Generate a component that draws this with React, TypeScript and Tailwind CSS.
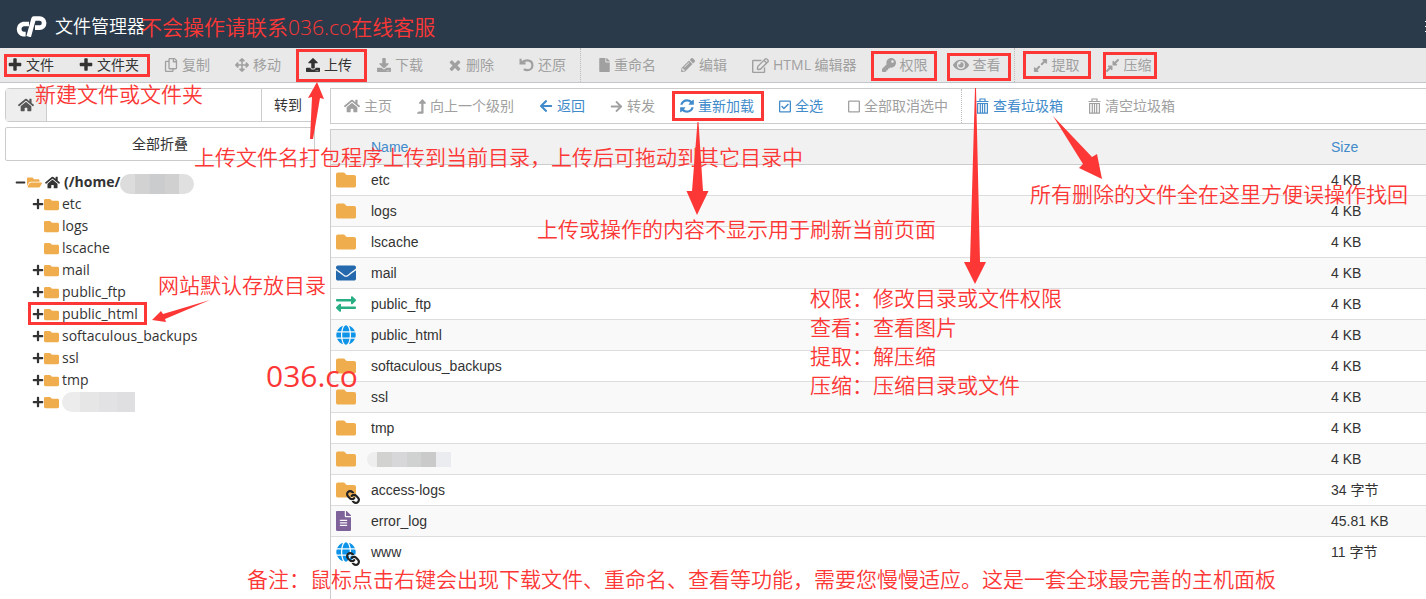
import { useState } from 'react';
import type { ReactNode } from 'react';
import {
  FaArrowLeft,
  FaArrowRight,
  FaArrowsAlt,
  FaCompressAlt,
  FaDownload,
  FaEnvelope,
  FaExchangeAlt,
  FaExpandAlt,
  FaEye,
  FaFile,
  FaFileAlt,
  FaFolder,
  FaFolderOpen,
  FaGlobe,
  FaHome,
  FaKey,
  FaLevelUpAlt,
  FaLink,
  FaMinus,
  FaPencilAlt,
  FaPlus,
  FaRegCheckSquare,
  FaRegCopy,
  FaRegEdit,
  FaRegSquare,
  FaUpload
} from 'react-icons/fa';

type Item = { label: string; icon: ReactNode; tone?: string };

const Glyph = ({ d }: { d: string }) => (
  <svg width="16" height="16" viewBox="0 0 1792 1792" fill="currentColor" className="-mx-px">
    <path d={d} />
  </svg>
);

const plusPath =
  'M1600 736v192q0 40-28 68t-68 28h-416v416q0 40-28 68t-68 28h-192q-40 0-68-28t-28-68v-416h-416q-40 0-68-28t-28-68v-192q0-40 28-68t68-28h416v-416q0-40 28-68t68-28h192q40 0 68 28t28 68v416h416q40 0 68 28t28 68z';
const timesPath =
  'M1490 1322q0 40-28 68l-136 136q-28 28-68 28t-68-28l-294-294-294 294q-28 28-68 28t-68-28l-136-136q-28-28-28-68t28-68l294-294-294-294q-28-28-28-68t28-68l136-136q28-28 68-28t68 28l294 294 294-294q28-28 68-28t68 28l136 136q28 28 28 68t-28 68l-294 294 294 294q28 28 28 68z';
const refreshPath =
  'M1639 1056q0 5-1 7-64 268-268 434.5t-478 166.5q-146 0-282.5-55t-243.5-157l-129 129q-19 19-45 19t-45-19-19-45v-448q0-26 19-45t45-19h448q26 0 45 19t19 45-19 45l-137 137q71 66 161 102t187 36q134 0 250-65t186-179q11-17 53-117 8-23 30-23h192q13 0 22.500 9.500t9.500 22.500zm25-800v448q0 26-19 45t-45 19h-448q-26 0-45-19t-19-45 19-45l138-138q-148-137-349-137-134 0-250 65t-186 179q-11 17-53 117-8 23-30 23h-199q-13 0-22.500-9.500t-9.500-22.500v-7q65-268 270-434.500t480-166.500q146 0 284 55.500t245 156.500l130-129q19-19 45-19t45 19 19 45z';

const UndoIcon = () => (
  <svg width="15" height="14" viewBox="0 0 15 14" fill="none" stroke="currentColor" strokeWidth="2.2">
    <path d="M1.6 0.8V5.4H6.6M2.2 5C4 3 5.5 2.3 8.2 2.3C11.5 2.3 13.4 4.4 13.4 7.2C13.4 10.2 11.3 12.2 8.4 12.2C7 12.2 5.8 11.9 4.8 11.2" />
  </svg>
);

const TrashIcon = () => (
  <svg width="13" height="16" viewBox="0 0 13 16" fill="none" stroke="currentColor" strokeWidth="1.2">
    <path d="M0.5 3.5h12M4 3.2V1h5v2.2M1.6 5.5h9.8v9.7H1.6zM4.3 5.5v9.5M6.5 5.5v9.5M8.7 5.5v9.5" />
  </svg>
);

const Logo = () => (
  <svg width="31" height="21" viewBox="47 47 93 63" fill="none" stroke="currentColor" strokeWidth="14">
    <path d="M86 71H69A15.5 15.5 0 0 0 69 101.5H76" />
    <path d="M85 109L100 54.5H118A12.5 12.8 0 0 1 118 82H104" strokeLinejoin="round" />
  </svg>
);

const fileActions: Item[] = [
  { label: '文件', icon: <Glyph d={plusPath} />, tone: 'text-[#333]' },
  { label: '文件夹', icon: <Glyph d={plusPath} />, tone: 'text-[#333]' },
  { label: '复制', icon: <FaRegCopy size={14} /> },
  { label: '移动', icon: <FaArrowsAlt size={14} /> },
  { label: '上传', icon: <FaUpload size={14} />, tone: 'text-[#333]' },
  { label: '下载', icon: <FaDownload size={14} /> },
  { label: '删除', icon: <Glyph d={timesPath} /> },
  { label: '还原', icon: <UndoIcon /> }
];

const editActions: Item[] = [
  { label: '重命名', icon: <FaFile size={14} className="w-[11px]" /> },
  { label: '编辑', icon: <FaPencilAlt size={14} /> },
  { label: 'HTML 编辑器', icon: <FaRegEdit size={17} /> },
  { label: '权限', icon: <FaKey size={14} /> },
  { label: '查看', icon: <FaEye size={16} /> }
];

const archiveActions: Item[] = [
  { label: '提取', icon: <FaExpandAlt size={15} /> },
  { label: '压缩', icon: <FaCompressAlt size={15} /> }
];

const navActions: Item[] = [
  { label: '主页', icon: <FaHome size={16} /> },
  { label: '向上一个级别', icon: <FaLevelUpAlt size={15} className="w-[9px]" /> },
  { label: '返回', icon: <FaArrowLeft size={14} />, tone: 'text-[#428bca]' },
  { label: '转发', icon: <FaArrowRight size={13} /> },
  { label: '重新加载', icon: <Glyph d={refreshPath} />, tone: 'text-[#428bca]' },
  { label: '全选', icon: <FaRegCheckSquare size={15} className="w-3" />, tone: 'text-[#428bca]' },
  { label: '全部取消选中', icon: <FaRegSquare size={15} className="w-3" /> }
];

const trashActions: Item[] = [
  { label: '查看垃圾箱', icon: <TrashIcon />, tone: 'text-[#428bca]' },
  { label: '清空垃圾箱', icon: <TrashIcon /> }
];

const tree = [
  { name: 'etc', expandable: true },
  { name: 'logs', expandable: false },
  { name: 'lscache', expandable: false },
  { name: 'mail', expandable: true },
  { name: 'public_ftp', expandable: true },
  { name: 'public_html', expandable: true },
  { name: 'softaculous_backups', expandable: true },
  { name: 'ssl', expandable: true },
  { name: 'tmp', expandable: true },
  { name: '', expandable: true }
];

const files = [
  { name: 'etc', type: 'folder', size: '4 KB' },
  { name: 'logs', type: 'folder', size: '4 KB' },
  { name: 'lscache', type: 'folder', size: '4 KB' },
  { name: 'mail', type: 'mail', size: '4 KB' },
  { name: 'public_ftp', type: 'ftp', size: '4 KB' },
  { name: 'public_html', type: 'web', size: '4 KB' },
  { name: 'softaculous_backups', type: 'folder', size: '4 KB' },
  { name: 'ssl', type: 'folder', size: '4 KB' },
  { name: 'tmp', type: 'folder', size: '4 KB' },
  { name: '', type: 'folder', size: '4 KB' },
  { name: 'access-logs', type: 'folder', size: '34 字节', link: true },
  { name: 'error_log', type: 'log', size: '45.81 KB' },
  { name: 'www', type: 'web', size: '11 字节', link: true }
];

const fileIcons: Record<string, ReactNode> = {
  folder: <FaFolder size={20} className="text-[#f0ad4e]" />,
  mail: <FaEnvelope size={20} className="text-[#2469ae]" />,
  ftp: <FaExchangeAlt size={20} className="text-[#27ae83]" />,
  web: <FaGlobe size={20} className="text-[#0d93e8]" />,
  log: <FaFileAlt size={20} className="w-[15px] text-[#7f6299]" />
};

const boxes = [
  'left-[4px] top-[54px] w-[146px] h-[23px]',
  'left-[296px] top-[49px] w-[71px] h-[33px]',
  'left-[871px] top-[51px] w-[66px] h-[30px]',
  'left-[947px] top-[53px] w-[64px] h-[28px]',
  'left-[1023px] top-[51px] w-[68px] h-[28px]',
  'left-[1103px] top-[52px] w-[54px] h-[27px]',
  'left-[672px] top-[91px] w-[92px] h-[30px]',
  'left-[28px] top-[302px] w-[119px] h-[23px]'
];

const notes = [
  { text: '不会操作请联系036.co在线客服', place: 'left-[141px] top-[12px]' },
  { text: '新建文件或文件夹', place: 'left-[35px] top-[79px]' },
  { text: '上传文件名打包程序上传到当前目录，上传后可拖动到其它目录中', place: 'left-[194px] top-[142px]' },
  { text: '上传或操作的内容不显示用于刷新当前页面', place: 'left-[537px] top-[214px]' },
  { text: '所有删除的文件全在这里方便误操作找回', place: 'left-[1030px] top-[179px]' },
  { text: '网站默认存放目录', place: 'left-[158px] top-[270px]' },
  {
    text: '备注：鼠标点击右键会出现下载文件、重命名、查看等功能，需要您慢慢适应。这是一套全球最完善的主机面板',
    place: 'left-[247px] top-[564px]'
  }
];

const legend = ['权限：修改目录或文件权限', '查看：查看图片', '提取：解压缩', '压缩：压缩目录或文件'];

function ActionGroup({ items }: { items: Item[] }) {
  return (
    <div className="flex items-center gap-[25px]">
      {items.map((item) => (
        <button
          key={item.label}
          className={`flex items-center gap-1 whitespace-nowrap ${item.tone ?? 'text-[#a0a0a0]'}`}
        >
          {item.icon}
          <span>{item.label}</span>
        </button>
      ))}
    </div>
  );
}

function Header() {
  return (
    <header className="flex h-12 items-center overflow-hidden bg-[#2a3a4a] pt-1 pl-4 text-white">
      <Logo />
      <h1 className="ml-2 text-lg font-[350]">文件管理器</h1>
      <div className="ml-auto flex w-px flex-col gap-1">
        <span className="h-px bg-white" />
        <span className="h-px bg-white" />
        <span className="h-px bg-white" />
      </div>
    </header>
  );
}

function Sidebar() {
  const [path, setPath] = useState('');

  return (
    <aside className="w-[310px] shrink-0">
      <div className="flex h-[34px] rounded-sm border border-[#ccc]">
        <button aria-label="主页" className="flex w-[41px] items-center justify-center border-r border-[#ccc] bg-[#eee] text-[#555]">
          <FaHome size={16} />
        </button>
        <input
          aria-label="路径"
          value={path}
          onChange={(e) => setPath(e.target.value)}
          className="min-w-0 flex-1 px-3 outline-none"
        />
        <button className="w-[53px] border-l border-[#ccc]">转到</button>
      </div>
      <button className="mt-[5px] h-[34px] w-full rounded-xs border border-[#ccc]">全部折叠</button>

      {/* Directory tree */}
      <ul className="mt-[10px] pl-[10px]">
        <li className="flex h-[22px] items-center font-bold">
          <FaMinus size={11} />
          <FaFolderOpen size={15} className="ml-px text-[#f0ad4e]" />
          <FaHome size={15} className="ml-[3px]" />
          <span className="ml-1">(/home/</span>
          <span className="mt-1 flex h-5 w-[74px] overflow-hidden rounded-full">
            <span className="flex-1 bg-[#dcdcdc]" />
            <span className="flex-1 bg-[#d2d2d3]" />
            <span className="flex-1 bg-[#cbccce]" />
            <span className="flex-1 bg-[#d0d0d1]" />
            <span className="flex-1 bg-[#e0e0e1]" />
          </span>
        </li>
        {tree.map((node) => (
          <li key={node.name} className="flex h-[22px] items-center pl-[17px]">
            <span className="w-3">{node.expandable && <FaPlus size={12} />}</span>
            <FaFolder size={15} className="text-[#f0ad4e]" />
            {node.name ? (
              <a href="#" className="ml-[3px]">{node.name}</a>
            ) : (
              <span className="ml-[3px] flex h-5 w-[73px] overflow-hidden rounded-l-full">
                <span className="flex-1 bg-[#ececed]" />
                <span className="flex-1 bg-[#e6e6e7]" />
                <span className="flex-1 bg-[#e2e2e4]" />
                <span className="flex-1 bg-[#dfdfe1]" />
              </span>
            )}
          </li>
        ))}
      </ul>
    </aside>
  );
}

function FileTable() {
  return (
    <div className="mt-[5px] flex-1 border-l border-[#ccc] font-['Liberation_Sans','Noto_Sans_CJK_SC',sans-serif]">
      <table className="w-full border-collapse text-left">
        <thead>
          <tr className="h-[35px] border-y border-[#ccc] bg-[#f1f1f1] text-[#428bca]">
            <th className="w-10" />
            <th className="font-normal">Name</th>
            <th className="w-[95px] font-normal">Size</th>
          </tr>
        </thead>
        <tbody>
          {files.map((file) => (
            <tr key={file.name} className="h-[31px] border-b border-[#ddd] last:border-0 even:bg-[#f9f9f9]">
              <td className="pl-[5px]">
                <span className="relative block w-5">
                  {fileIcons[file.type]}
                  {file.link && <FaLink size={14} className="absolute -right-1 -bottom-1 rotate-90 text-[#222]" />}
                </span>
              </td>
              <td>
                {file.name || (
                  <span className="-ml-1 flex h-[15px] w-[84px] overflow-hidden rounded-l-full">
                    <span className="w-[10px] bg-[#eee]" />
                    <span className="flex-1 bg-[#d2d2d1]" />
                    <span className="flex-1 bg-[#d7d7d9]" />
                    <span className="flex-1 bg-[#d0d2d2]" />
                    <span className="flex-1 bg-[#cacaca]" />
                    <span className="flex-1 bg-[#ebecef]" />
                  </span>
                )}
              </td>
              <td>{file.size}</td>
            </tr>
          ))}
        </tbody>
      </table>
    </div>
  );
}

/* Red tutorial marks drawn over the file manager */
function Annotations() {
  return (
    <div className="pointer-events-none absolute inset-0 overflow-hidden text-[21px] leading-[30px] font-[350] whitespace-nowrap text-[#fc3736]">
      {boxes.map((box) => (
        <div key={box} className={`absolute border-3 border-[#fc3736] ${box}`} />
      ))}
      <svg className="absolute top-0 left-0" width="1426" height="599" fill="#fc3736">
        <path d="M317 82L308 98L312 97L310 139L313 139L320 98L324 99Z" />
        <path d="M697.5 122L692 191L686.5 191L697 215L708.5 191L703 191L698.5 122Z" />
        <path d="M975 88L970 262L964 262L975 284L986 262L980 262L976 88Z" />
        <path d="M1053 116L1083 164L1079 168L1102 179L1097 154L1092 157Z" />
        <path d="M210 300L163 314L161 311L152 320L166 322L165 319Z" />
      </svg>
      {notes.map((note) => (
        <p key={note.text} className={`absolute ${note.place}`}>{note.text}</p>
      ))}
      <p className="absolute top-[356px] left-[266px] text-[30px] leading-10 font-normal">036.co</p>
      <ul className="absolute top-[284px] left-[810px] leading-[29px]">
        {legend.map((line) => (
          <li key={line}>{line}</li>
        ))}
      </ul>
    </div>
  );
}

export default function App() {
  return (
    <div className="relative flex min-h-screen flex-col overflow-hidden bg-white font-['Open_Sans','Noto_Sans_CJK_SC',sans-serif] text-sm text-[#333]">
      <Header />
      <div className="flex h-[35px] border-b border-[#c3c7cb] bg-[#e9e9e9] pl-2">
        <ActionGroup items={fileActions} />
        <div className="ml-[14px] border-l border-dotted border-[#bbb] pr-[18px]" />
        <ActionGroup items={editActions} />
        <div className="ml-[13px] border-l border-dotted border-[#bbb] pr-[18px]" />
        <ActionGroup items={archiveActions} />
      </div>
      <div className="flex flex-1 gap-[15px] pt-[5px] pl-[5px]">
        <Sidebar />
        <main className="flex min-w-0 flex-1 flex-col">
          <nav className="flex h-9 border border-r-0 border-[#ccc] pl-[13px]">
            <ActionGroup items={navActions} />
            <div className="ml-[13px] border-l border-dotted border-[#bbb] pr-[14px]" />
            <ActionGroup items={trashActions} />
          </nav>
          <FileTable />
        </main>
      </div>
      <Annotations />
    </div>
  );
}
